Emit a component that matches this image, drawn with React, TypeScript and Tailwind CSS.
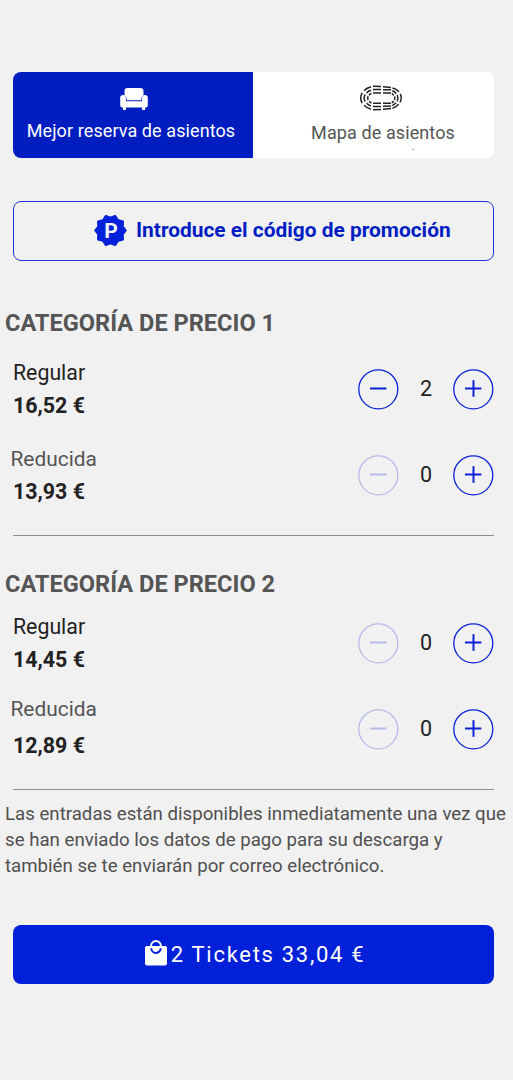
import { useState } from 'react';
import clsx from 'clsx';

interface Ticket {
  id: string;
  label: string;
  price: number;
  labelClass: string;
}

interface Category {
  title: string;
  headingClass: string;
  tickets: Ticket[];
}

const CATEGORIES: Category[] = [
  {
    title: 'CATEGORÍA DE PRECIO 1',
    headingClass: 'mt-[46px] mb-[7px]',
    tickets: [
      { id: 'c1-regular', label: 'Regular', price: 16.52, labelClass: 'text-[21.3px] text-[#222]' },
      { id: 'c1-reducida', label: 'Reducida', price: 13.93, labelClass: '-ml-[2.5px] text-[20.9px] text-[#555]' },
    ],
  },
  {
    title: 'CATEGORÍA DE PRECIO 2',
    headingClass: 'mt-8',
    tickets: [
      { id: 'c2-regular', label: 'Regular', price: 14.45, labelClass: 'text-[21.3px] text-[#222]' },
      { id: 'c2-reducida', label: 'Reducida', price: 12.89, labelClass: '-ml-[2.5px] -mt-[5px] mb-[5px] text-[20.9px] text-[#555]' },
    ],
  },
];

const formatPrice = (n: number) => `${n.toFixed(2).replace('.', ',')} €`;

function SofaIcon() {
  return (
    <svg width="28" height="23" viewBox="0 0 28 23" fill="currentColor">
      <path d="M7.5 0h13a3 3 0 0 1 3 3v4.2a3.6 3.6 0 0 0-2.100 3.2v1.900H6.6v-1.900a3.6 3.6 0 0 0-2.100-3.2V3a3 3 0 0 1 3-3z" />
      <path d="M3 7a2.8 2.8 0 0 1 2.900 2.8v3.4h16.2V9.8a2.8 2.8 0 0 1 5.7 0v7.700a2 2 0 0 1-2 2h-.7V22h-3v-2.500H5.900V22h-3v-2.500h-.7a2 2 0 0 1-2-2V9.8A2.8 2.8 0 0 1 3 7z" />
    </svg>
  );
}

// Tres anillos de gradas alrededor del campo
function StadiumIcon() {
  return (
    <svg width="44" height="26" viewBox="0 0 44 26" fill="none" stroke="#222">
      <g strokeWidth="1.5">
        <path d="M14 1.2l8 .4M24 1.7l8 .7M14 4.6h8M24 4.7h8M14 8h8M24 8h8" />
        <path d="M14 24.8l8-.4M24 24.3l8-.7M14 21.5h8M24 21.2l8-.3M14 18.2h8M24 18.2h8" />
        <path d="M12 1.8Q8 2.8 5.2 5.6M3.2 8Q.2 13 3.2 18M5 20.2Q8 23.2 12 24.2" />
        <path d="M12 5.2Q9.5 5.8 7.5 8M6.2 9.5Q4 13 6.2 16.5M7.6 18.2Q9.5 20.3 12 20.9" />
        <path d="M12.5 8.5Q11 8.9 10 10.2M9.2 11.2Q8 13 9.2 15M10.2 16.2Q11.2 17.5 12.6 17.9" />
        <path d="M33.5 3Q37.5 4 40 6.8M41.2 8.8Q43.3 13 41 17.5M39.7 19.3Q37 22.3 33.5 23.2" />
        <path d="M33.3 5.8Q35.5 6.5 37.2 8.5M38.2 10Q39.8 13 38.2 16.3M37 17.8Q35.3 19.9 33.3 20.4" />
        <path d="M32.8 8.7Q34 9.2 34.8 10.4M35.5 11.5Q36.4 13 35.5 14.9M34.7 16Q33.9 17.2 32.8 17.7" />
      </g>
    </svg>
  );
}

function PromoIcon() {
  const points = Array.from({ length: 20 }, (_, i) => {
    const r = i % 2 ? 13.4 : 16;
    const a = (i * Math.PI) / 10;
    return `${(16.5 + r * Math.cos(a)).toFixed(2)},${(16.5 + r * Math.sin(a)).toFixed(2)}`;
  }).join(' ');

  return (
    <svg width="33" height="33" viewBox="0 0 33 33" className="-mt-px shrink-0">
      <polygon points={points} fill="#0020d9" stroke="#0020d9" strokeLinejoin="round" />
      <text x="17" y="24" textAnchor="middle" className="fill-[#f1f1f1] text-[21px] font-bold">
        P
      </text>
    </svg>
  );
}

function BagIcon() {
  return (
    <svg width="22" height="26" viewBox="0 0 22 26" fill="none">
      <rect y="6" width="22" height="19.5" rx="2" fill="white" />
      <path d="M6.2 6a4.8 4.8 0 0 1 9.6 0" stroke="white" strokeWidth="2.2" />
      <path d="M7.3 6a3.7 3.7 0 0 1 7.4 0z" fill="#0020d9" />
      <path d="M6.2 8.3a4.8 4.6 0 0 0 9.6 0" stroke="#0020d9" strokeWidth="2" />
    </svg>
  );
}

function RoundButton({ plus, disabled, onClick }: { plus?: boolean; disabled?: boolean; onClick: () => void }) {
  return (
    <button
      disabled={disabled}
      onClick={onClick}
      aria-label={plus ? 'Añadir' : 'Quitar'}
      className={clsx('size-[41px] text-[#0a22d6]', disabled ? 'opacity-25' : 'cursor-pointer')}
    >
      <svg width="41" height="41" viewBox="0 0 41 41" fill="none" stroke="currentColor">
        <circle cx="20.3" cy="20.3" r="19.5" strokeWidth="1.3" />
        <path d="M12 19.5h16.4" strokeWidth="2" />
        {plus && <path d="M20.5 11.2v16.6" strokeWidth="2" />}
      </svg>
    </button>
  );
}

export default function App() {
  const [tab, setTab] = useState<'mejor' | 'mapa'>('mejor');
  const [counts, setCounts] = useState<Record<string, number>>({ 'c1-regular': 2 });

  const change = (id: string, delta: number) =>
    setCounts(prev => ({ ...prev, [id]: Math.max(0, (prev[id] ?? 0) + delta) }));

  const tickets = CATEGORIES.flatMap(c => c.tickets);
  const totalCount = tickets.reduce((sum, t) => sum + (counts[t.id] ?? 0), 0);
  const totalPrice = tickets.reduce((sum, t) => sum + (counts[t.id] ?? 0) * t.price, 0);

  return (
    <main className="h-[1080px] w-[513px] overflow-hidden bg-[#f1f1f1] pt-[72px] font-['Roboto',sans-serif]">
      {/* Tabs */}
      <div className="ml-[13px] flex h-[86px] w-[481px] overflow-hidden rounded-lg bg-white text-[18px]">
        <button
          onClick={() => setTab('mejor')}
          className={clsx(
            'flex w-60 flex-col items-center pt-[16px]',
            tab === 'mejor' ? 'bg-[#001dc0] text-white' : 'text-[#555]'
          )}
        >
          <span className="ml-[2px]"><SofaIcon /></span>
          <span className="mt-[6px] -ml-[4px] leading-7 tracking-[0.09px] whitespace-nowrap">Mejor reserva de asientos</span>
        </button>
        <button
          onClick={() => setTab('mapa')}
          className={clsx('flex flex-1 flex-col items-center pt-[13px]', tab === 'mapa' ? 'bg-[#d9defa]' : 'bg-white')}
        >
          <span className="ml-[15px]"><StadiumIcon /></span>
          <span className="mt-[8px] ml-[19px] leading-7 tracking-[0.1px] text-[#555]">Mapa de asientos</span>
          <span className="mt-[2px] ml-[78px] h-px w-[2px] shrink-0 bg-[#aaa]" />
        </button>
      </div>

      {/* Código promocional */}
      <button className="mt-[43px] ml-[13px] flex h-[60px] w-[481px] items-center rounded-lg border-[1.5px] border-[#1c36dc] pl-[80px]">
        <PromoIcon />
        <span className="-mt-px ml-[9px] text-[20.9px] font-bold whitespace-nowrap text-[#001dc4]">Introduce el código de promoción</span>
      </button>

      {CATEGORIES.map(category => (
        <section key={category.title}>
          <h2 className={clsx('ml-[5px] text-[23.6px] leading-8 font-bold text-[#555]', category.headingClass)}>
            {category.title}
          </h2>
          {category.tickets.map(ticket => {
            const count = counts[ticket.id] ?? 0;
            return (
              <div key={ticket.id} className="mr-[19px] ml-[13px] flex h-[86px] items-center justify-between">
                <div>
                  <p className={clsx('leading-8', ticket.labelClass)}>{ticket.label}</p>
                  <p className="mt-px -mb-px text-[21.4px] leading-8 font-bold text-[#222]">{formatPrice(ticket.price)}</p>
                </div>
                <div className="flex items-center">
                  <RoundButton disabled={count === 0} onClick={() => change(ticket.id, -1)} />
                  <span className="w-[54px] text-center text-[21.5px] leading-8 text-[#222]">{count}</span>
                  <RoundButton plus onClick={() => change(ticket.id, 1)} />
                </div>
              </div>
            );
          })}
          <hr className="mt-[17px] mr-[19px] ml-[13px] border-[#8e8e8e]" />
        </section>
      ))}

      <p className="mt-[11px] ml-[5px] text-[18.67px] leading-[26px] whitespace-nowrap text-[#505050]">
        Las entradas están disponibles inmediatamente una vez que
        <br />
        se han enviado los datos de pago para su descarga y
        <br />
        también se te enviarán por correo electrónico.
      </p>

      <button className="mt-[46px] ml-[13px] flex h-[59px] w-[481px] items-center justify-center gap-[4px] rounded-lg bg-[#0020d9] pl-[3px] text-white">
        <span className="-mt-[3px]"><BagIcon /></span>
        <span className="text-[22px] tracking-[1.7px]">
          {totalCount} Tickets {formatPrice(totalPrice)}
        </span>
      </button>
    </main>
  );
}
